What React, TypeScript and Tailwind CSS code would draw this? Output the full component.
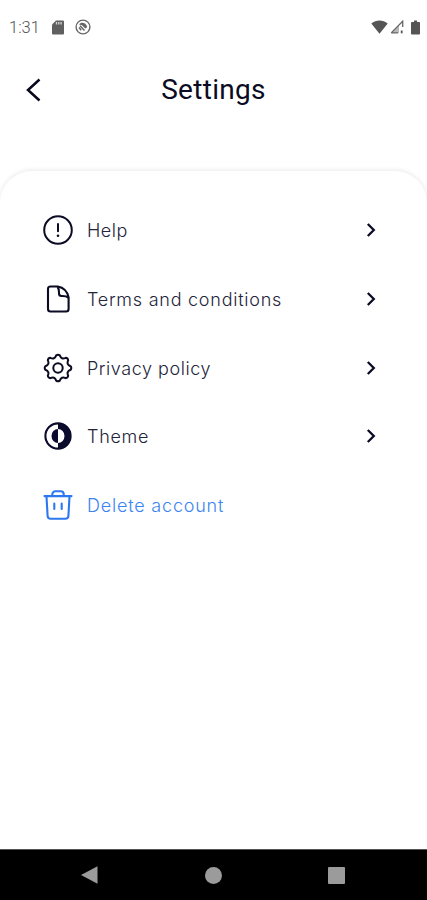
import type { ReactNode } from "react";

interface RowProps {
  icon: ReactNode;
  label: string;
  labelClass: string;
  chevron?: boolean;
}

function StatusBar() {
  return (
    <div className="flex h-[54px] items-center justify-between pl-[9px] pr-[7px] text-[#666]">
      <div className="flex items-center">
        <span className="w-[43px] pt-[2px] font-['Roboto',sans-serif] text-[16.5px] font-light leading-none text-[#555]">
          1:31
        </span>
        {/* SD card */}
        <svg width="12" height="15" viewBox="0 0 12 15" className="mr-[11px]">
          <path d="M4 .5h7a1 1 0 0 1 1 1v12a1 1 0 0 1-1 1H1a1 1 0 0 1-1-1v-9z" fill="#606060" />
          <path d="M4.5 2v2.500M6.800 2v2.500M9.100 2v2.500" stroke="#d8d8d8" strokeWidth="1.300" />
        </svg>
        {/* Sync badge */}
        <svg width="16" height="16" viewBox="0 0 16 16" fill="none">
          <circle cx="8" cy="8" r="6.9" stroke="#666" strokeWidth="1.4" />
          <path d="M4 5.500C6 2.500 11 3.500 12.300 8l-2 1.500L7 6.200z" fill="#666" />
          <path d="M4 8.500l2.200 2.800M5 6.800l4.500 4.700" stroke="#666" strokeWidth="1.500" />
        </svg>
      </div>
      <div className="flex items-center">
        <svg width="17" height="14" viewBox="0 0 17 14" className="mr-[2px]">
          <path d="M.3 3.6C5-.4 12-.4 16.7 3.6L8.5 13.7z" fill="#555" />
        </svg>
        <svg width="14" height="14" viewBox="0 0 14 14" className="mr-[7px]">
          <path d="M1.2 12.9 12.7 1.200V7M1.200 12.900H8" fill="none" stroke="#666" strokeWidth="1.300" />
          <path d="M1 13 9 5v8z" fill="#666" opacity=".45" />
          <path d="M11.700 10.500v2.800" stroke="#555" strokeWidth="1.800" />
        </svg>
        <svg width="9" height="15" viewBox="0 0 9 15">
          <path d="M3 .5h3V2h2.200c.4 0 .8.4.8.8v10.900c0 .4-.4.8-.8.8H.8c-.4 0-.8-.4-.8-.8V2.800c0-.4.4-.8.8-.8H3z" fill="#555" />
        </svg>
      </div>
    </div>
  );
}

function HelpIcon() {
  return (
    <svg width="30" height="30" viewBox="-15 -15 30 30" fill="none" stroke="#0b0b24" strokeWidth="2" strokeLinecap="round">
      <circle r="13.8" />
      <path d="M0-6V1.200" />
      <circle cy="5.700" r="1.300" fill="#0b0b24" stroke="none" />
    </svg>
  );
}

function FileIcon() {
  return (
    <svg width="30" height="30" viewBox="-15 -15 30 30" fill="none" stroke="#0b0b24" strokeWidth="2.1" strokeLinejoin="round">
      <path d="M-7.500-12.500H-.3C5.500-11.500 9.500-7 10.600-1.500V10a2.500 2.500 0 0 1-2.500 2.500H-7.500A2.500 2.500 0 0 1-10 10V-10a2.500 2.500 0 0 1 2.500-2.500z" />
      <path d="M-.5-12C1.300-10 1-8 1-5.500Q1-3 3.500-3C6-3 8.500-3.200 10.400-1.300" />
    </svg>
  );
}

function GearIcon() {
  return (
    <svg width="30" height="30" viewBox="-15 -15 30 30" fill="none" stroke="#0b0b24" strokeWidth="2" strokeLinejoin="round">
      <path d="M-1.800-12.600Q0-14 1.800-12.600Q3.370-8.130 7.640-10.180Q9.900-9.900 10.180-7.640Q8.130-3.370 12.600-1.800Q14 0 12.600 1.800Q8.130 3.370 10.180 7.640Q9.900 9.900 7.640 10.180Q3.370 8.130 1.800 12.600Q0 14-1.800 12.600Q-3.370 8.130-7.640 10.180Q-9.900 9.900-10.180 7.640Q-8.130 3.370-12.600 1.800Q-14 0-12.600-1.800Q-8.130-3.370-10.180-7.640Q-9.900-9.900-7.640-10.180Q-3.370-8.130-1.800-12.600z" />
      <circle r="4.700" />
    </svg>
  );
}

function ThemeIcon() {
  return (
    <svg width="30" height="30" viewBox="-15 -15 30 30">
      <circle r="12.600" fill="none" stroke="#0b0b2c" strokeWidth="2.100" />
      <path d="M0-13a13 13 0 0 1 0 26V7A6.500 7 0 0 0 0-7z" fill="#0b0b2c" />
      <path d="M0-7A6.500 7 0 0 0 0 7z" fill="#0b0b2c" />
    </svg>
  );
}

function TrashIcon() {
  return (
    <svg width="30" height="32" viewBox="-15 -16 30 32" fill="none" stroke="#2c78ee" strokeWidth="2.1" strokeLinecap="round" strokeLinejoin="round">
      <path d="M-13.500-8.900h27" />
      <path d="M-5.700-9.200v-1.500a3 3 0 0 1 3-3h5.400a3 3 0 0 1 3 3v1.500" />
      <path d="M-11.500-8.500-10.400 11a3 3 0 0 0 3 2.800H7.400a3 3 0 0 0 3-2.800L11.500-8.500" />
      <path d="M-3.700-1.500V4M3.700-1.500V4" />
    </svg>
  );
}

function Row({ icon, label, labelClass, chevron = true }: RowProps) {
  return (
    <button className="flex h-[68.7px] w-full items-center pl-[43px] pr-[50px] text-left">
      <span className="mr-[14px] flex w-[30px] shrink-0 justify-center">{icon}</span>
      <span className={`flex-1 whitespace-nowrap pt-[2px] font-['Inter',sans-serif] text-[18px] font-light leading-6 ${labelClass}`}>
        {label}
      </span>
      {chevron && (
        <svg width="12" height="16" viewBox="0 0 12 16" fill="none" stroke="#0b0b24" strokeWidth="2.3">
          <path d="M2.800 2 8.800 8l-6 6" />
        </svg>
      )}
    </button>
  );
}

export default function App() {
  return (
    <div className="flex h-[900px] w-full flex-col overflow-hidden bg-white">
      <StatusBar />

      {/* Header */}
      <header className="grid h-[117px] grid-cols-[60px_1fr_60px] items-start pt-[16px]">
        <button className="flex h-10 items-center pl-[25px]" aria-label="Back">
          <svg width="16" height="24" viewBox="0 0 16 24" fill="none" stroke="#08081c" strokeWidth="2.500">
            <path d="M14.500 1.500 3 12l11.500 10.500" />
          </svg>
        </button>
        <h1 className="pt-px text-center font-['Roboto',sans-serif] text-[28px] font-[450] leading-[38px] tracking-[0.3px] text-[#0b0b24]">
          Settings
        </h1>
      </header>

      {/* Options */}
      <main className="flex-1 rounded-t-[32px] bg-white pt-[25px] shadow-[0_-1px_5px_rgba(0,0,0,0.09)]">
        <Row icon={<HelpIcon />} label="Help" labelClass="text-[#24243a] tracking-[0.5px]" />
        <Row icon={<FileIcon />} label="Terms and conditions" labelClass="text-[#24243a] tracking-[0.75px]" />
        <Row icon={<GearIcon />} label="Privacy policy" labelClass="text-[#24243a] tracking-[0.55px]" />
        <Row icon={<ThemeIcon />} label="Theme" labelClass="text-[#24243a] tracking-[0.7px]" />
        <Row icon={<TrashIcon />} label="Delete account" labelClass="text-[#3c84f0] tracking-[0.8px]" chevron={false} />
      </main>

      {/* System navigation */}
      <nav className="flex h-[51px] shrink-0 items-center justify-between border-t border-[#555] bg-black pl-[81px] pr-[82px]">
        <svg width="17" height="18" viewBox="0 0 17 18">
          <path d="M0 9 16.500.2v17.600z" fill="#9b9b9b" />
        </svg>
        <span className="size-[17px] rounded-full bg-[#9b9b9b]" />
        <span className="size-[17px] rounded-[1px] bg-[#9b9b9b]" />
      </nav>
    </div>
  );
}
